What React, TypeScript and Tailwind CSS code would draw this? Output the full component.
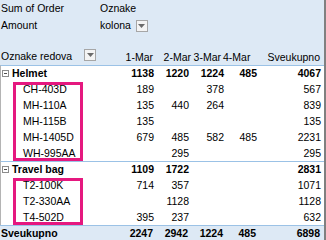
import React from 'react';

type Row = {
  label: string;
  values: (number | null)[];
};

const HELMET: Row[] = [
  { label: 'CH-403D', values: [189, null, 378, null, 567] },
  { label: 'MH-110A', values: [135, 440, 264, null, 839] },
  { label: 'MH-115B', values: [135, null, null, null, 135] },
  { label: 'MH-1405D', values: [679, 485, 582, 485, 2231] },
  { label: 'WH-995AA', values: [null, 295, null, null, 295] },
];

const TRAVEL: Row[] = [
  { label: 'T2-100K', values: [714, 357, null, null, 1071] },
  { label: 'T2-330AA', values: [null, 1128, null, null, 1128] },
  { label: 'T4-502D', values: [395, 237, null, null, 632] },
];

const GRID = 'grid grid-cols-[98px_55px_35px_35px_33px_64px]';

function DropButton() {
  return (
    <span className="inline-flex items-center justify-center w-[12px] h-[12px] border border-[#a6a6a6] bg-[#f4f4f4]">
      <svg width="7" height="4" viewBox="0 0 7 4">
        <path d="M0 0h7L3.5 4z" fill="#6b6b6b" />
      </svg>
    </span>
  );
}

function Collapse() {
  return (
    <span className="relative inline-block w-[7px] h-[7px] border border-[#8c8c8c] bg-white mr-[3px]">
      <span className="absolute left-[1px] right-[1px] top-[2px] h-px bg-[#505050]" />
    </span>
  );
}

function Cells({ values, bold }: { values: (number | null)[]; bold?: boolean }) {
  return (
    <>
      {values.map((v, i) => (
        <div key={i} className={`text-right ${bold ? 'font-bold' : ''}`}>
          {v ?? ''}
        </div>
      ))}
    </>
  );
}

function GroupRow({ label, values }: { label: string; values: (number | null)[] }) {
  return (
    <div className={`${GRID} h-[16px] box-border border-t border-[#9bc2e6] border-l border-l-[#b4b4b4] items-center leading-[15px]`}>
      <div className="flex items-center pl-[1px] font-bold">
        <Collapse />
        {label}
      </div>
      <Cells values={values} bold />
    </div>
  );
}

function ItemRows({ rows }: { rows: Row[] }) {
  return (
    <div className="relative">
      {rows.map((r) => (
        <div key={r.label} className={`${GRID} h-[16px] items-center leading-[15px] border-l border-[#b4b4b4]`}>
          <div className="pl-[22px]">{r.label}</div>
          <Cells values={r.values} />
        </div>
      ))}
      {/* highlight around the item labels */}
      <div className="absolute left-[13px] w-[70px] top-[1px] bottom-0 border-[3px] border-[#e5187f]" />
    </div>
  );
}

export default function App() {
  return (
    <div
      className="w-[326px] h-[240px] overflow-hidden bg-white border-r-2 border-[#808080] text-[10.5px] text-black"
      style={{ fontFamily: '"Liberation Sans", Arial, sans-serif' }}
    >
      {/* Header */}
      <div className="h-[65px] bg-[#dde9f5]">
        <div className={`${GRID} h-[33px] leading-[17px]`}>
          <div className="pl-[1px]">
            Sum of Order
            <br />
            Amount
          </div>
          <div className="col-span-2 pl-[2px]">
            Oznake
            <div className="flex items-center gap-[5px]">
              kolona
              <DropButton />
            </div>
          </div>
        </div>
        <div className={`${GRID} h-[32px] items-end leading-[16px] whitespace-nowrap`}>
          <div className="flex items-center justify-between pl-[1px] pr-[2px] pb-[1px]">
            Oznake redova
            <span className="mb-[2px] flex">
              <DropButton />
            </span>
          </div>
          <div className="text-right">1-Mar</div>
          <div className="flex justify-end">
            <span className="-mr-[3px]">2-Mar</span>
          </div>
          <div className="text-right pr-[2px]">3-Mar</div>
          <div className="text-right pr-[6px]">4-Mar</div>
          <div className="text-right">Sveukupno</div>
        </div>
      </div>

      {/* Body */}
      <GroupRow label="Helmet" values={[1138, 1220, 1224, 485, 4067]} />
      <ItemRows rows={HELMET} />
      <GroupRow label="Travel bag" values={[1109, 1722, null, null, 2831]} />
      <ItemRows rows={TRAVEL} />

      {/* Grand total */}
      <div className={`${GRID} h-[16px] box-border border-t border-[#9bc2e6] bg-[#dde9f5] items-center leading-[15px] font-bold`}>
        <div className="pl-[1px]">Sveukupno</div>
        <Cells values={[2247, 2942, 1224, 485, 6898]} bold />
      </div>
    </div>
  );
}
